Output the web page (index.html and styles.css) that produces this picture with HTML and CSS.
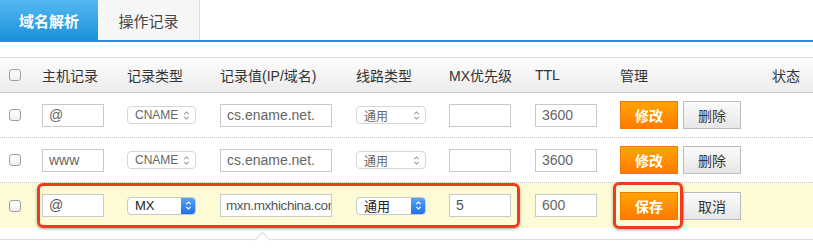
FILE: index.html
```html
<!DOCTYPE html>
<html lang="zh">
<head>
<meta charset="utf-8">
<link rel="stylesheet" href="styles.css">
</head>
<body>
<div class="tabs">
  <div class="tab active">域名解析</div>
  <div class="tab">操作记录</div>
</div>
<div class="table">
  <div class="row head">
    <div class="c c1"><span class="cb"></span></div>
    <div class="c c2">主机记录</div>
    <div class="c c3">记录类型</div>
    <div class="c c4">记录值(IP/域名)</div>
    <div class="c c5">线路类型</div>
    <div class="c c6">MX优先级</div>
    <div class="c c7">TTL</div>
    <div class="c c8">管理</div>
    <div class="c c9">状态</div>
  </div>
  <div class="row">
    <div class="c c1"><span class="cb"></span></div>
    <div class="c c2"><div class="inp w62">@</div></div>
    <div class="c c3"><div class="sel w69"><span>CNAME</span><svg class="chev" viewBox="0 0 8 12"><path d="M1.5 4.5 4 2 6.5 4.5M1.5 7.5 4 10 6.5 7.5" fill="none" stroke="#999" stroke-width="1.2"/></svg></div></div>
    <div class="c c4"><div class="inp w112">cs.ename.net.</div></div>
    <div class="c c5"><div class="sel w70"><span>通用</span><svg class="chev" viewBox="0 0 8 12"><path d="M1.5 4.5 4 2 6.5 4.5M1.5 7.5 4 10 6.5 7.5" fill="none" stroke="#999" stroke-width="1.2"/></svg></div></div>
    <div class="c c6"><div class="inp w62"></div></div>
    <div class="c c7"><div class="inp w62">3600</div></div>
    <div class="c c8"><div class="btn orange">修改</div><div class="btn gray">删除</div></div>
    <div class="c c9"></div>
  </div>
  <div class="row">
    <div class="c c1"><span class="cb"></span></div>
    <div class="c c2"><div class="inp w62">www</div></div>
    <div class="c c3"><div class="sel w69"><span>CNAME</span><svg class="chev" viewBox="0 0 8 12"><path d="M1.5 4.5 4 2 6.5 4.5M1.5 7.5 4 10 6.5 7.5" fill="none" stroke="#999" stroke-width="1.2"/></svg></div></div>
    <div class="c c4"><div class="inp w112">cs.ename.net.</div></div>
    <div class="c c5"><div class="sel w70"><span>通用</span><svg class="chev" viewBox="0 0 8 12"><path d="M1.5 4.5 4 2 6.5 4.5M1.5 7.5 4 10 6.5 7.5" fill="none" stroke="#999" stroke-width="1.2"/></svg></div></div>
    <div class="c c6"><div class="inp w62"></div></div>
    <div class="c c7"><div class="inp w62">3600</div></div>
    <div class="c c8"><div class="btn orange">修改</div><div class="btn gray">删除</div></div>
    <div class="c c9"></div>
  </div>
  <div class="row edit">
    <div class="c c1"><span class="cb"></span></div>
    <div class="c c2"><div class="inp w62 dark">@</div></div>
    <div class="c c3"><div class="sel w69 focus"><span>MX</span><span class="blue"><svg class="chev" viewBox="0 0 8 12"><path d="M1.5 4.5 4 2 6.5 4.5M1.5 7.5 4 10 6.5 7.5" fill="none" stroke="#fff" stroke-width="1.3"/></svg></span></div></div>
    <div class="c c4"><div class="inp w112 dark tight">mxn.mxhichina.com</div></div>
    <div class="c c5"><div class="sel w70 focus"><span>通用</span><span class="blue"><svg class="chev" viewBox="0 0 8 12"><path d="M1.5 4.5 4 2 6.5 4.5M1.5 7.5 4 10 6.5 7.5" fill="none" stroke="#fff" stroke-width="1.3"/></svg></span></div></div>
    <div class="c c6"><div class="inp w62 dark">5</div></div>
    <div class="c c7"><div class="inp w62">600</div></div>
    <div class="c c8"><div class="btn orange">保存</div><div class="btn gray">取消</div></div>
    <div class="c c9"></div>
    <div class="mark mark1"></div>
    <div class="mark mark2"></div>
  </div>
  <div class="foot"></div>
</div>
</body>
</html>
```

FILE: styles.css
```css
* { box-sizing: border-box; }
html, body { margin: 0; padding: 0; background: #fff; }
body {
  font-family: "Liberation Sans", "Noto Sans CJK SC", sans-serif;
  color: #333;
  width: 813px;
  height: 248px;
  overflow: hidden;
}
.tabs {
  display: flex;
  height: 42px;
  border-bottom: 2px solid #1b93de;
}
.tab {
  width: 102px;
  height: 40px;
  display: flex;
  align-items: center;
  justify-content: center;
  font-size: 15px;
  color: #444;
  background: #f6f6f6;
  border-right: 1px solid #dcdcdc;
}
.tab.active {
  width: 98px;
  color: #fff;
  font-weight: bold;
  background: linear-gradient(#55b8f0, #1a92dd);
  border-right: none;
}
.table { margin-top: 15px; }
.row {
  display: flex;
  align-items: center;
  height: 45px;
  border-bottom: 1px dotted #c4c4c4;
  position: relative;
}
.row.head {
  height: 36px;
  border-top: 1px solid #dedede;
  border-bottom: 1px solid #cfcfcf;
  background: linear-gradient(#fdfdfd, #ececec);
  font-size: 14px;
  color: #333;
}
.row.edit {
  background: #fcfbd6;
  border-bottom: none;
}
.c { display: flex; align-items: center; flex: none; }
.c1 { width: 42px; padding-left: 9px; }
.c2 { width: 85px; }
.c3 { width: 93px; }
.c4 { width: 136px; }
.c5 { width: 93px; }
.c6 { width: 86px; }
.c7 { width: 85px; }
.c8 { width: 152px; gap: 5px; }
.c9 { width: 41px; }
.cb {
  display: block;
  width: 12px;
  height: 12px;
  border: 1px solid #9f9f9f;
  border-radius: 3px;
  background: linear-gradient(#fff, #f0f0f0);
}
.inp {
  height: 23px;
  border: 1px solid #c9c9c9;
  background: #fff;
  font-size: 14px;
  line-height: 21px;
  color: #666;
  padding-left: 6px;
  white-space: nowrap;
  overflow: hidden;
}
.inp.dark { color: #555; }
.inp.tight { font-size: 13.5px; letter-spacing: -0.4px; padding-left: 5px; }
.w62 { width: 62px; }
.w112 { width: 112px; }
.w69 { width: 69px; }
.w70 { width: 70px; }
.sel {
  height: 18px;
  border: 1px solid #d6d6d6;
  border-radius: 4px;
  background: #fff;
  display: flex;
  align-items: center;
  justify-content: space-between;
  font-size: 12px;
  color: #666;
  padding-left: 7px;
  padding-right: 5px;
  overflow: hidden;
}
.sel .chev { width: 7px; height: 11px; display: block; }
.sel.focus {
  padding-right: 0;
  color: #222;
  font-size: 13px;
  border-color: #c8c8c8;
}
.sel .blue {
  width: 15px;
  height: 18px;
  margin-right: -1px;
  background: linear-gradient(#5aa6f7, #1c6ee8);
  display: flex;
  align-items: center;
  justify-content: center;
}
.btn {
  width: 58px;
  height: 28px;
  display: flex;
  align-items: center;
  justify-content: center;
  font-size: 14px;
}
.btn.orange {
  color: #fff;
  font-weight: bold;
  background: linear-gradient(#ffa500, #ff7a00);
  border: 1px solid #ec7a0a;
}
.btn.gray {
  color: #333;
  background: linear-gradient(#fbfbfb, #e7e7e7);
  border: 1px solid #bcbcbc;
}
.mark {
  position: absolute;
  border: 3px solid #f23a1c;
  border-radius: 6px;
  box-shadow: 0 1px 3px rgba(0, 0, 0, 0.35);
  pointer-events: none;
}
.mark1 { left: 37px; top: 0; width: 483px; height: 45px; }
.mark2 { left: 613px; top: -1px; width: 70px; height: 47px; }
.foot {
  margin-top: 11px;
  height: 10px;
  border-top: 1px solid #dcdcdc;
  position: relative;
}
.foot::before {
  content: "";
  position: absolute;
  left: 257px;
  top: -6px;
  width: 10px;
  height: 10px;
  background: #fff;
  border-top: 1px solid #dcdcdc;
  border-left: 1px solid #dcdcdc;
  transform: rotate(45deg);
}
```
